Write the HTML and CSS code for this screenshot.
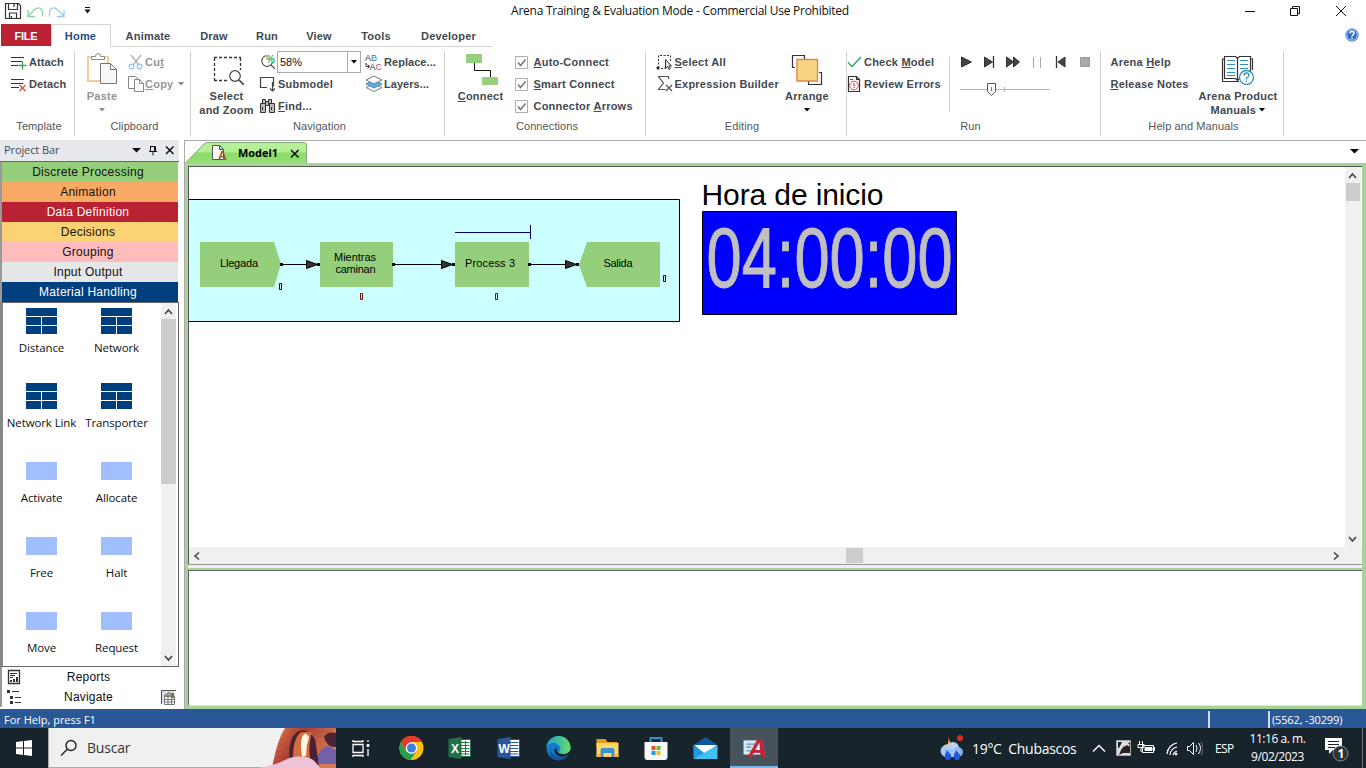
FILE: index.html
```html
<!DOCTYPE html>
<html lang="es">
<head>
<meta charset="utf-8">
<title>Arena Training &amp; Evaluation Mode</title>
<link rel="stylesheet" href="styles.css">
</head>
<body>
<svg width="0" height="0" class="defs">
  <symbol id="net" viewBox="0 0 31 26"><path fill="#003f7d" d="M0 0h31v8H0zM0 9h15v8H0zM16 9h15v8H16zM0 18h15v8H0zM16 18h15v8H16z"/></symbol>
  <symbol id="box" viewBox="0 0 31 26"><path fill="#a1bfff" d="M0 4h31v18H0z"/></symbol>
  <symbol id="chk" viewBox="0 0 13 13"><path fill="#fff" stroke="#b0b0b0" d="M.5.5h12v12H.5z"/><path fill="none" stroke="#777" stroke-width="1.6" d="M3 6.5 5.5 9.5 10.5 3.5"/></symbol>
  <symbol id="arr" viewBox="0 0 6 4"><path d="M0 0h6L3 3.5z"/></symbol>
</svg>
<div class="window">
  <header class="titlebar">
    <div class="quick">
      <svg width="95" height="22" viewBox="0 0 95 22" fill="none">
        <path stroke="#333" stroke-width="1.2" d="M5.5 3.5h13l2 2v13h-15zM8.5 3.5v6h9v-6M9.500 18v-5h7v5M11.500 16v2M14 4v3"/>
        <path stroke="#8fd0a5" stroke-width="1.3" d="M28 10v6.500h7M28 16l8-7.500q5-2 6.500 3v5"/>
        <path stroke="#9cc9ea" stroke-width="1.300" d="M64 10v6.500h-7M64 16l-8-7.500q-5-2-6.500 3v5"/>
        <path fill="#111" d="M85 7h5v1h-5zM84.500 9.500h6l-3 4z"/>
      </svg>
    </div>
    <div class="title">Arena Training &amp; Evaluation Mode - Commercial Use Prohibited</div>
    <svg class="winbtns" width="126" height="22" viewBox="1240 0 126 22" fill="none" stroke="#111">
      <path d="M1245 11.500h10M1290.500 8.500h7v7h-7zM1292.500 8v-1.500h7v7h-2M1336 6l10 10M1346 6l-10 10"/>
    </svg>
  </header>

  <nav class="tabs">
    <span class="tab file">FILE</span><span class="tab home">Home</span><span class="tab t3">Animate</span><span class="tab t4">Draw</span><span class="tab t5">Run</span><span class="tab t6">View</span><span class="tab t7">Tools</span><span class="tab t8">Developer</span>
    <svg class="help" width="14" height="14" viewBox="0 0 14 14"><circle cx="7" cy="7" r="6.300" fill="#2f67c8" stroke="#7ea6de"/><circle cx="7" cy="7" r="5.200" fill="none" stroke="#dce9fa" stroke-width=".7"/><path fill="none" stroke="#fff" stroke-width="1.500" d="M5 5.500q0-2 2-2t2 1.700q0 1-1 1.600T7 8.500M7 9.500V11"/></svg>
  </nav>

  <section class="ribbon">
    <div class="group g1">
      <div class="body">
        <div class="col">
          <div class="btn"><svg width="18" height="16" viewBox="0 0 18 16" fill="none"><path stroke="#333" stroke-width="1.200" d="M1 3.500h13M1 7.500h11M1 11.500h7"/><path stroke="#3da563" stroke-width="1.300" d="M12.500 7.500v8M8.500 11.500h8"/></svg><b>Attach</b></div>
          <div class="btn"><svg width="18" height="16" viewBox="0 0 18 16" fill="none"><path stroke="#333" stroke-width="1.200" d="M1 3.500h13M1 7.500h12M1 11.500h8"/><path stroke="#e34848" stroke-width="1.300" d="M9.500 9l6 6M15.500 9l-6 6"/></svg><b>Detach</b></div>
        </div>
      </div>
      <div class="glabel">Template</div>
    </div>
    <div class="group g2">
      <div class="body dim">
        <div class="big paste">
          <svg width="32" height="34" viewBox="0 0 32 34"><path fill="none" stroke="#f5cd9c" stroke-width="2" d="M2 6h20v24H2z"/><path fill="#fff" stroke="#8a8a8a" d="M5.500 8.500v-3h4q0-3 2.500-3t2.500 3h4v3z"/><path fill="#f7f7f8" stroke="#777" d="M14.500 12.500h10l6 6v14h-16zM24.500 12.500v6h6"/></svg>
          <b>Paste</b><svg class="down" width="6" height="4"><use href="#arr"/></svg>
        </div>
        <div class="col clip">
          <div class="btn"><svg width="18" height="18" viewBox="0 0 18 18" fill="none"><path stroke="#999" stroke-width="1.200" d="M4 2l8 10M14 2 6 12"/><circle cx="4.500" cy="13.500" r="2.300" stroke="#8fc5e8" stroke-width="1.200"/><circle cx="12.500" cy="13.500" r="2.300" stroke="#8fc5e8" stroke-width="1.200"/></svg><b>Cu<u>t</u></b></div>
          <div class="btn"><svg width="18" height="18" viewBox="0 0 18 18" fill="#fff" stroke="#888"><path d="M1.500 1.500h7l3 3v9h-10z"/><path d="M7.500 4.500h5l4 4v8h-9zM12.500 4.500v4h4"/></svg><b><u>C</u>opy</b><svg class="side" width="6" height="4"><use href="#arr"/></svg></div>
        </div>
      </div>
      <div class="glabel">Clipboard</div>
    </div>
    <div class="group g3">
      <div class="body">
        <div class="big sel">
          <svg width="32" height="34" viewBox="0 0 32 34" fill="none"><path stroke="#333" stroke-width="1.300" stroke-dasharray="3 2" d="M2 6.500h27M2.500 7v22M28.500 7v12M2 29.500h15"/><circle cx="23" cy="25" r="5.300" fill="#fff" stroke="#444" stroke-width="1.200"/><path stroke="#444" stroke-width="1.700" d="M27 29l5 5"/></svg>
          <b>Select<br>and Zoom</b>
        </div>
        <div class="col nav1">
          <div class="btn"><svg width="18" height="18" viewBox="0 0 18 18" fill="none"><path stroke="#555" stroke-width="1.100" d="M7 2.500a5.500 5.500 0 1 0 6.500 7M12 12l4 4"/><text x="7" y="9.500" class="pct">%</text></svg><span class="combo"><span>58%</span><i><svg width="6" height="4"><use href="#arr"/></svg></i></span></div>
          <div class="btn"><svg width="18" height="18" viewBox="0 0 18 18" fill="none" stroke="#444" stroke-width="1.200"><path d="M8 12.500H1.500v-10h13v9M13.500 7v9M11 13.500l2.500 2.500 2.500-2.500"/></svg><b>Submodel</b></div>
          <div class="btn"><svg width="18" height="18" viewBox="0 0 18 18" fill="#bbb" stroke="#333"><path d="M3.500 2.500h3v4h-3zM9.500 2.500h3v4h-3zM6.500 4.500h3v4h-3zM1.500 6.500h5v9h-5zM10.500 6.500h5v9h-5zM3.500 10v3M12.500 10v3"/></svg><b><u>F</u>ind...</b></div>
        </div>
        <div class="col nav2">
          <div class="btn"><svg width="18" height="18" viewBox="0 0 18 18"><text x="0" y="8" class="abc">A<tspan fill="#1e80ca">B</tspan></text><text x="4.500" y="17" class="abc">A<tspan fill="#e03b3b">C</tspan></text><path fill="none" stroke="#333" d="M1 10v3.500h3M2.500 11.500l2 2-2 2"/></svg><b>Replace...</b></div>
          <div class="btn"><svg width="18" height="18" viewBox="0 0 18 18" stroke="#777"><path fill="#fff" d="M1 12.500l8-4 8 4-8 4z"/><path fill="#55aee5" stroke="#3690cb" d="M1 9l8-4 8 4-8 4z"/><path fill="#fff" d="M1 5l8-4 8 4-8 4z"/></svg><b>Layers...</b></div>
        </div>
      </div>
      <div class="glabel">Navigation</div>
    </div>
    <div class="group g4">
      <div class="body">
        <div class="big conn">
          <svg width="34" height="34" viewBox="0 0 34 34"><path fill="#95cf7c" d="M2 3h16v9H2zM18 26h16v9H18z"/><path fill="none" stroke="#111" d="M10.500 12v7.500h16V26"/></svg>
          <b><u>C</u>onnect</b>
        </div>
        <div class="col checks">
          <div class="btn"><svg width="13" height="13"><use href="#chk"/></svg><b><u>A</u>uto-Connect</b></div>
          <div class="btn"><svg width="13" height="13"><use href="#chk"/></svg><b><u>S</u>mart Connect</b></div>
          <div class="btn"><svg width="13" height="13"><use href="#chk"/></svg><b>Connector <u>A</u>rrows</b></div>
        </div>
      </div>
      <div class="glabel">Connections</div>
    </div>
    <div class="group g5">
      <div class="body">
        <div class="col edit">
          <div class="btn"><svg width="17" height="18" viewBox="0 0 17 18" fill="none" stroke="#333"><path stroke-dasharray="2 1.500" d="M2.500 15V2.500h12V8M5 15.500h5"/><path fill="#333" d="M1 14h2v2H1z"/><path fill="#ddd" d="M9.500 6.500v9l2-2 1.500 3 1.500-1-1.500-2.500h2.500z"/></svg><b><u>S</u>elect All</b></div>
          <div class="btn"><svg width="17" height="18" viewBox="0 0 17 18" fill="none" stroke="#555" stroke-width="1.200"><path d="M12.500 4V1.500h-10l5 6.500-5 6.500h7M10 10l6 6M16 10l-6 6"/></svg><b>Expression Builder</b></div>
        </div>
        <div class="big arrange">
          <svg width="32" height="34" viewBox="0 0 32 34"><path fill="none" stroke="#333" stroke-width="1.200" d="M4 16.500H1.500v-12h12V8M28 21.500h2.500v12h-13V30"/><path fill="#f7d584" stroke="#dc8a46" stroke-width="1.400" d="M6 8.500h20.500V30H6z"/></svg>
          <b>Arrange</b><svg class="down" width="6" height="4"><use href="#arr"/></svg>
        </div>
      </div>
      <div class="glabel">Editing</div>
    </div>
    <div class="group g6">
      <div class="body">
        <div class="col check">
          <div class="btn"><svg width="17" height="18" viewBox="0 0 17 18" fill="none"><path stroke="#3da563" stroke-width="1.500" d="M1 9.500l4 4L14 4"/></svg><b>Check <u>M</u>odel</b></div>
          <div class="btn"><svg width="17" height="18" viewBox="0 0 17 18" fill="#fff"><path stroke="#333" stroke-width="1.200" d="M1.500 1.500h8l3 3v12h-11zM9.500 1.500v3h3"/><path stroke="#555" d="M3 4.500h3"/><circle cx="7" cy="10.500" r="4.300" stroke="#e04545"/><path stroke="#e04545" stroke-width="1.300" d="M7 8v3M7 12v1"/></svg><b>Review Errors</b></div>
        </div>
        <svg class="player" width="151" height="88" viewBox="949 49 151 88">
          <path stroke="#d0d0d0" d="M949.500 57v55"/>
          <g fill="#444" stroke="#333"><path d="M961.500 57v10l10-5zM984.500 57v10l8-5zM1006.500 57v10l7-5zM1013.500 57v10l6-5zM1065 57v10l-7-5z"/><path fill="none" stroke-width="1.300" d="M993.500 56v12M1056.500 56v12"/></g>
          <path stroke="#aaa" d="M1033.500 57v11M1040.500 57v11"/><path fill="#aaa" stroke="#999" d="M1080.500 57.500h9v9h-9z"/>
          <path fill="none" stroke="#b4b4b4" d="M960 89.500h90M1004.500 87v5"/><path fill="#fff" stroke="#555" d="M987.500 83.500h8v8l-4 4-4-4z"/><path stroke="#777" d="M991.500 87v4"/>
        </svg>
      </div>
      <div class="glabel">Run</div>
    </div>
    <div class="group g7">
      <div class="body">
        <div class="col"><div class="btn"><b>Arena <u>H</u>elp</b></div><div class="btn"><b><u>R</u>elease Notes</b></div></div>
        <div class="big manuals">
          <svg width="34" height="34" viewBox="0 0 34 34" fill="#fff"><path stroke="#333" stroke-width="1.200" d="M3 8H1.500v22.500H18M29 8h2.500v11M16.500 8v22.500M3.500 5.500h11l2 2 2-2h11v22h-11l-2 2-2-2h-11z"/><path stroke="#2d8fc4" stroke-width="1.200" d="M6 9.500h8M6 13.500h8M6 17.500h8M6 21.500h8M6 24.500h8M19 9.500h8M19 13.500h8M19 17.500h8"/><circle cx="25.500" cy="26.500" r="7" stroke="#2d8fc4" stroke-width="1.300"/><path fill="none" stroke="#2d8fc4" stroke-width="1.300" d="M23 24.500q0-2.500 2.500-2.500t2.500 2-2.500 3v1.500M25.500 29.500V31"/></svg>
          <b>Arena Product<br>Manuals <svg width="6" height="4"><use href="#arr"/></svg></b>
        </div>
      </div>
      <div class="glabel">Help and Manuals</div>
    </div>
  </section>

  <main class="workspace">
    <aside class="project">
      <div class="phead"><span>Project Bar</span><svg width="44" height="12" viewBox="0 0 44 12" fill="none" stroke="#111"><path fill="#111" stroke="none" d="M0 4h9L4.500 8.500z"/><path d="M18.500 2.500h5v5M18.500 2v5.500M17 7.500h8M21 8v3.500M22.500 2v5"/><path stroke-width="1.500" d="M34 2.500l7.500 7.500M41.500 2.500L34 10"/></svg></div>
      <div class="panels">
        <div class="panel green">Discrete Processing</div>
        <div class="panel orange">Animation</div>
        <div class="panel red">Data Definition</div>
        <div class="panel yellow">Decisions</div>
        <div class="panel pink">Grouping</div>
        <div class="panel grey">Input Output</div>
        <div class="panel navy">Material Handling</div>
      </div>
      <div class="palette">
        <div class="items">
          <div class="item"><svg width="31" height="26"><use href="#net"/></svg>Distance</div>
          <div class="item"><svg width="31" height="26"><use href="#net"/></svg>Network</div>
          <div class="item"><svg width="31" height="26"><use href="#net"/></svg>Network Link</div>
          <div class="item"><svg width="31" height="26"><use href="#net"/></svg>Transporter</div>
          <div class="item"><svg width="31" height="26"><use href="#box"/></svg>Activate</div>
          <div class="item"><svg width="31" height="26"><use href="#box"/></svg>Allocate</div>
          <div class="item"><svg width="31" height="26"><use href="#box"/></svg>Free</div>
          <div class="item"><svg width="31" height="26"><use href="#box"/></svg>Halt</div>
          <div class="item"><svg width="31" height="26"><use href="#box"/></svg>Move</div>
          <div class="item"><svg width="31" height="26"><use href="#box"/></svg>Request</div>
        </div>
        <div class="pscroll"><svg width="15" height="16" viewBox="0 0 15 16"><path d="M4 11l3.500-4 3.500 4"/></svg><div class="pthumb"></div><svg class="end" width="15" height="16" viewBox="0 0 15 16"><path d="M4 6l3.500 4L11 6"/></svg></div>
      </div>
      <div class="extra"><svg width="14" height="16" viewBox="0 0 14 16" fill="none" stroke="#333"><path stroke-width="1.300" d="M1.500 1.500h11v13h-11z"/><path d="M3 4.500h7M3 6.500h5M3 8.500h3"/><path stroke-width="2" d="M4 13v-2M7 13v-3M10 13V8"/></svg><span>Reports</span><i></i></div>
      <div class="extra"><svg width="14" height="16" viewBox="0 0 14 16" fill="#333"><path d="M0 1h3v3H0zM3 7h3v3H3zM3 12h3v3H3zM5 2h7v1H5zM8 8h6v1H8zM8 13h6v1H8z"/></svg><span>Navigate</span><svg width="15" height="15" viewBox="0 0 15 15" fill="none" stroke="#777"><path fill="#ddd" stroke="#555" d="M.5 14V.5H15"/><path fill="#fff" d="M3.500 6.500h10v8h-10zM3 9.500h10M3 12h10M7 7v7M10.500 7v7"/><path fill="#aaa" d="M3 6l5-3.500 3 1.500v2z"/><path stroke="#7b7a35" stroke-width="2.500" d="M12 3v5"/></svg></div>
    </aside>

    <section class="doc">
      <div class="doctabs">
        <svg class="tabshape" width="124" height="23" viewBox="0 0 124 23"><defs><linearGradient id="tg" x2="0" y2="1"><stop stop-color="#b8f29a"/><stop offset=".45" stop-color="#b2ed92"/><stop offset=".5" stop-color="#8bdc68"/><stop offset="1" stop-color="#96df78"/></linearGradient></defs><path fill="url(#tg)" stroke="#83a777" d="M1 22.500 19 4q2-2.500 5-2.500h96q2.500 0 2.500 2.500v18.500"/><path fill="#fff" stroke="#555" d="M28.500 4.500h7l4 4v10h-11zM35.500 4.500v4h4"/><text x="34" y="19" class="docA">A</text><text x="54" y="16" class="docname" textLength="40" lengthAdjust="spacingAndGlyphs">Model1</text><path stroke="#111" stroke-width="1.600" d="M107 9l7.500 7.500M114.500 9l-7.500 7.500"/></svg>
        <svg width="10" height="6" viewBox="0 0 10 6"><path d="M0 0h9L4.500 4.500z"/></svg>
      </div>
      <div class="frame">
        <div class="view">
          <svg class="canvas" width="1156" height="380" viewBox="189 167 1156 380">
            <path fill="#cff" stroke="#000" d="M187.500 199.500h492v122h-492z"/>
            <g fill="#95cf7c"><path d="M200 242h74l7 22-7 23h-74zM320 242h73v45h-73zM455 242h74v45h-74zM587 242h73v45h-73l-8-22z"/></g>
            <g stroke="#000"><path d="M281 264.500h39M393 264.500h62M529 264.500h50"/><path fill="#333" d="M306.500 260.500v8l11-4zM441.500 260.500v8l11-4zM565.500 260.500v8l11-4z"/></g>
            <path d="M280 263h3v3h-3zM317 263h3v3h-3zM392 263h3v3h-3zM452 263h3v3h-3zM528 263h3v3h-3zM576 263h3v3h-3z"/>
            <path fill="none" stroke="#006" d="M455 232.500h75M530.500 225v14M279.500 283.500h2v6h-2zM663.500 275.500h2v6h-2z"/>
            <path fill="none" stroke="#701010" d="M360.500 293.500h2v6h-2zM495.500 293.500h2v6h-2z"/>
            <g class="node"><text x="220" y="267" textLength="38">Llegada</text><text x="334" y="261" textLength="42">Mientras</text><text x="335.500" y="273" textLength="40">caminan</text><text x="465" y="267" textLength="50">Process 3</text><text x="603.500" y="267" textLength="29">Salida</text></g>
            <text class="start" x="701.500" y="204.500" textLength="182">Hora de inicio</text>
            <path fill="#00f" stroke="#000" d="M702.500 211.500h254v103h-254z"/>
            <text class="clock" transform="translate(706.500 287) scale(.744 1)">04:00:00</text>
          </svg>
          <div class="vscroll"><svg width="15" height="16" viewBox="0 0 15 16"><path d="M4 11l3.500-4 3.500 4"/></svg><div class="vthumb"></div><svg class="end" width="15" height="16" viewBox="0 0 15 16"><path d="M4 6l3.500 4L11 6"/></svg></div>
        </div>
        <div class="hscroll"><svg width="16" height="16" viewBox="0 0 16 16"><path d="M10 4.500L6 8l4 3.500"/></svg><div class="hthumb"></div><svg class="hend" width="16" height="16" viewBox="0 0 16 16"><path d="M6 4.500L10 8l-4 3.500"/></svg></div>
        <div class="split"></div>
        <div class="lower"></div>
      </div>
    </section>
  </main>

  <footer class="status"><span>For Help, press F1</span><span class="cell blank"></span><span class="cell">(5562, -30299)</span></footer>

  <div class="taskbar">
    <div class="startbtn"><svg width="16" height="16" viewBox="0 0 16 16"><path fill="#fff" d="M0 2l7-1v6.500H0zM8 1l8-1v7.500H8zM0 8.500h7V15l-7-1zM8 8.500h8V16l-8-1z"/></svg></div>
    <div class="search"><svg width="18" height="18" viewBox="0 0 18 18" fill="none" stroke="#222" stroke-width="1.400"><circle cx="11" cy="6.500" r="5"/><path d="M7.500 10L1 16.500"/></svg><span>Buscar</span>
      <svg class="art" width="78" height="40" viewBox="258 728 78 40"><defs><linearGradient id="rk" x2="1" y2=".4"><stop stop-color="#e97b51"/><stop offset=".45" stop-color="#a63e31"/><stop offset="1" stop-color="#d87c55"/></linearGradient></defs><path fill="url(#rk)" d="M272 768q5-28 13-40h51v40z"/><path fill="#4d2030" d="M290 762q-3-22 7-30 10-5 18 7l4 26-17-1z"/><path fill="#d46c42" d="M293 758q0-20 8-26h11q-4 12-2 27z"/><path fill="#fff4e0" d="M302 757q-2-14 0-20 3-7 7 0-3 9-3 19z"/><path fill="#7161a8" d="M318 756q2-9 11-10l7 4v14h-18z"/><path fill="#4a2634" d="M324 737q3-6 12-4v14q-9 1-12-10z"/><path fill="#efc3d7" d="M258 768q18-3 27-8 9-5 20-3 8 1 12 7l3 4z"/><path stroke="#b84d37" d="M280 745h9M276 752h13M315 732h16M316 736h8"/></svg>
    </div>
    <div class="apps">
      <svg class="app" viewBox="0 0 48 40" fill="none" stroke="#fff"><path stroke-width="1.300" d="M16.500 16.500h10v8h-10zM16.500 12v2M26.500 12v2M16 13.500h11M16 27.500h11M16.500 27v2M26.500 27v2M31.500 12v2M31.500 21v7"/><path fill="#fff" d="M30.500 16.500h2v2h-2z"/></svg>
      <svg class="app" viewBox="1 0 48 40"><circle cx="27" cy="20" r="12" fill="#fbc116"/><path fill="#e33b2e" d="M16.500 14a12 12 0 0 1 21 0H27l-6 9z"/><path fill="#22a250" d="M16.500 14a12 12 0 0 0 9.500 18l6-9-5 3-6-3z"/><circle cx="27" cy="20" r="5.800" fill="#fff"/><circle cx="27" cy="20" r="4.500" fill="#3c7de6"/></svg>
      <svg class="app" viewBox="3 0 48 40"><path fill="#fff" stroke="#23754a" d="M27 11.500h12v17H27z"/><path stroke="#23754a" d="M29 14.500h9M29 17.500h9M29 20.500h9M29 23.500h9M29 26h9M34 13v14"/><path fill="#1f7246" d="M17 11l13-2v22l-13-2z"/><text x="19.500" y="25" class="office">X</text></svg>
      <svg class="app" viewBox="3 0 48 40"><path fill="#fff" stroke="#2b579a" d="M27 11.500h12v17H27z"/><path stroke="#2b579a" d="M29 14.500h9M29 17.500h9M29 20.500h9M29 23.500h9M29 26h9"/><path fill="#2b579a" d="M17 11l13-2v22l-13-2z"/><text x="18" y="25" class="office">W</text></svg>
      <svg class="app" viewBox="3 0 48 40"><defs><linearGradient id="ed" x2="1"><stop stop-color="#189fdb"/><stop offset="1" stop-color="#67dd62"/></linearGradient></defs><circle cx="29" cy="20" r="12" fill="#1779cd"/><path fill="url(#ed)" d="M17 19a12 12 0 0 1 24 2q-1 5-7 5-4 0-5-2 3-2 1-6-6-7-13 1z"/><path fill="#1555a0" d="M23 18q-4 5 2 9 5 3 12 1-6 7-14 3-5-4 0-13z"/><path fill="#18242b" d="M27 19q-1 7 6 7 5 1 8-4 0 4-4 6-7 2-11-2-3-4 1-7z"/></svg>
      <svg class="app" viewBox="4 0 48 40"><path fill="#e69a1d" d="M19 11h9l2 3h10v5H19z"/><path fill="#ffd768" d="M19 15h22v14H19z"/><path fill="#3f90d2" d="M23 29v-7q0-2 2-2h10q2 0 2 2v7h-3v-4h-8v4z"/><path fill="#f2b63c" d="M19 26h4v3h-4zM37 26h4v3h-4z"/></svg>
      <svg class="app" viewBox="5 0 48 40"><path fill="none" stroke="#2796cd" stroke-width="2" d="M25 15v-5h11v5"/><path fill="#f6f7f8" d="M19 14h23v15q0 3-3 3H22q-3 0-3-3z"/><path fill="#e84d24" d="M26 18h4v4h-4z"/><path fill="#75b928" d="M31 18h4v4h-4z"/><path fill="#1b9de2" d="M26 23h4v4h-4z"/><path fill="#f6b817" d="M31 23h4v4h-4z"/></svg>
      <svg class="app" viewBox="5 0 48 40"><path fill="#12589d" d="M19 17l12-8 12 8v5H19z"/><path fill="#fff" d="M20 17h22L31 27z"/><path fill="#229bde" d="M19 17l12 9-12 5z"/><path fill="#41c1f3" d="M43 17v14H19z"/></svg>
      <svg class="app active" viewBox="0 0 48 40"><path fill="#d6eaf5" d="M13 13h18v15H13z"/><path stroke="#6794bb" stroke-width="1.400" d="M16 17h9M16 20h5M16 24h7"/><text class="arenaA" x="18" y="30">A</text></svg>
    </div>
    <div class="tray">
      <svg width="28" height="28" viewBox="0 0 28 28"><path fill="#ffc43f" d="M11 2q-1 7 6 10l-5 5-8-2 2-4 4-1z"/><circle cx="8" cy="17" r="5.500" fill="#a9c9f2"/><circle cx="15" cy="14" r="6" fill="#b8d2f5"/><circle cx="20" cy="18" r="5" fill="#87b1ee"/><path fill="#9fc3f3" d="M6 15h15v8H6z"/><path fill="#1f58dc" d="M9 16l4 5q1 5-3 5t-3-5zM18 16l4 5q1 5-3 5t-3-5z"/><circle cx="22" cy="4" r="3" fill="#d72e23"/></svg>
      <span class="weather">19°C&nbsp; Chubascos</span>
      <svg class="icons" width="112" height="24" viewBox="1091 736 112 24" fill="none" stroke="#fff"><path stroke-width="1.400" d="M1093 751.500l6-6 6 6"/><path fill="#ddd" stroke="#aaa" d="M1116.500 740.500h14v15h-14z"/><path fill="#222" stroke="none" d="M1118 742h4l-3 6h-1zM1124 746l6-4v11h-7l-4 2 2-5z"/><path stroke="#ddd" stroke-width="2" d="M1124 746q4-4 5 0"/><path d="M1142.500 745.500h11v7h-11zM1154.500 747v4M1139.500 741v3M1142.500 741v3M1138 744.500h6v3h-6zM1141 747v5"/><path fill="#fff" d="M1145 747.500h7v3h-7z"/><path stroke-width="1.200" d="M1167 754a12 12 0 0 1 10-11M1170 755a9 9 0 0 1 7-8M1173 755a6 6 0 0 1 4-4"/><circle cx="1176" cy="754" r="1" fill="#fff"/><path d="M1187.500 746.500h2l4-4v12l-4-4h-2zM1196 745q2 3 0 7M1198.500 743q4 5 0 11"/><path stroke="#777" d="M1201 742q4 6 0 13"/></svg>
      <span class="lang">ESP</span>
      <div class="time"><span>11:16 a. m.</span><span>9/02/2023</span></div>
      <svg class="note" width="24" height="26" viewBox="0 0 24 26"><path fill="#fff" d="M0 1h17v12H8l-4 4v-4H0z"/><path stroke="#18232b" d="M3 4.500h11M3 7.500h11M3 10.500h7"/><circle cx="15.500" cy="16.500" r="7.500" fill="#2e3338" stroke="#888"/><text x="12.500" y="21" class="badge">1</text></svg>
      <i class="peek"></i>
    </div>
  </div>
</div>
</body>
</html>
```

FILE: styles.css
```css
* { box-sizing: border-box; }
body { margin: 0; background: #fff; font-family: "Open Sans", "Noto Sans", sans-serif; color: #111; }
svg { display: block; flex: none; }
.defs { position: absolute; }
.window { width: 1366px; height: 768px; display: flex; flex-direction: column; overflow: hidden; }

.titlebar { height: 24px; flex: none; display: grid; grid-template-columns: 240px 880px 1fr; }
.title { text-align: center; font: 12px/22px "Open Sans", sans-serif; letter-spacing: -.26px; white-space: nowrap; }
.winbtns { justify-self: end; }

.tabs { height: 23px; flex: none; display: flex; padding-left: 1px; font: bold 11px/24px "Liberation Sans", sans-serif; letter-spacing: .2px; color: #434950; }
.tab { text-align: center; height: 23px; border-bottom: 1px solid #d4d4d4; }
.file { width: 50px; height: 22px; background: #ba2132; color: #fff; border: 0; letter-spacing: -.2px; }
.home { width: 60px; border: 1px solid #d4d4d4; border-bottom: 0; color: #1e4c86; line-height: 22px; padding-right: 1px; }
.t3 { width: 74px; } .t4 { width: 58px; } .t5 { width: 48px; } .t6 { width: 56px; } .t7 { width: 58px; } .t8 { width: 88px; padding-right: 1px; }
.help { margin: 4px 7px 0 auto; }

.ribbon { height: 93px; flex: none; display: flex; padding-top: 4px; font: 11px/14px "Liberation Sans", sans-serif; color: #434950; }
.group { height: 85px; border-right: 1px solid #d2d2d2; display: flex; flex-direction: column; }
.body { display: flex; height: 68px; }
.glabel { text-align: center; color: #555; line-height: 15px; letter-spacing: .1px; white-space: nowrap; padding-left: 4px; }
.g1 { width: 75px; } .g2 { width: 116px; } .g3 { width: 254px; } .g4 { width: 201px; } .g5 { width: 201px; } .g6 { width: 254px; } .g7 { width: 183px; }
.g5 .glabel { padding-right: 12px; }
.g7 .glabel { padding-left: 3px; }
.col { display: flex; flex-direction: column; }
.btn { height: 22px; display: flex; align-items: center; gap: 1px; white-space: nowrap; }
.btn b, .big b { letter-spacing: .23px; }
u { text-underline-offset: 1px; }
.g1 .col { padding-left: 10px; }
.g1 .btn b { letter-spacing: .1px; }
.big { display: flex; flex-direction: column; align-items: center; text-align: center; white-space: nowrap; }
.big b { margin-top: 4px; }
.down { margin-top: 5px; }
.dim { color: #969696; fill: #888; }
.paste { width: 54px; }
.clip .btn { gap: 0; }
.clip { margin-left: -2px; }
.g2 .side { margin-left: 5px; }
.sel { width: 70px; padding-left: 1px; }
.sel svg { margin-left: 2px; }
.nav1 { width: 106px; margin-left: -2px; }
.combo { width: 84px; height: 22px; border: 1px solid #aaa; display: flex; color: #111; line-height: 20px; margin-left: -1px; }
.combo span { flex: 1; padding-left: 2px; }
.combo i { width: 13px; border-left: 1px solid #aaa; display: flex; align-items: center; justify-content: center; }
.nav2 .btn b { letter-spacing: .05px; }
.pct { font: bold 10px "Liberation Sans", sans-serif; fill: #3aa868; }
.abc { font: 9px "Liberation Sans", sans-serif; fill: #333; }
.conn { width: 70px; padding-left: 1px; }
.checks .btn { gap: 5px; }
.checks .btn b { padding-left: .5px; }
.edit { padding-left: 10px; width: 132px; }
.edit .btn b { padding-left: .5px; }
.arrange { width: 58px; }
.check { width: 103px; }
.check .btn { gap: 0; }
.player { margin-top: -2px; }
.g7 .col { padding-left: 9px; width: 96px; }
.g7 .col b { padding-left: .5px; }
.manuals { width: 82px; }
.manuals b svg { display: inline; vertical-align: 2px; }
.g6 .glabel { padding-right: 10px; }

.workspace { height: 569px; flex: none; display: flex; }
.project { width: 184px; flex: none; padding: 0 5px 0 0; }
.phead { height: 21px; width: 179px; background: #e7e9ed; display: flex; align-items: center; justify-content: space-between; padding: 0 3px 2px 4px; font-size: 11px; letter-spacing: -.1px; color: #444b53; }
.panels { border-top: 1px solid #666; border-left: 2px solid #999; }
.panel { height: 20px; font: 12px/20px "Liberation Sans", sans-serif; letter-spacing: .26px; text-align: center; padding-right: 4px; width: 176px; }
.green { background: #95cf7c; } .orange { background: #f9a966; } .red { background: #ba2132; color: #fff; } .yellow { background: #fbd274; }
.pink { background: #ffbcbd; } .grey { background: #e6e7e9; } .navy { background: #003f7d; color: #fff; }
.palette { height: 365px; border: 1px solid #666; border-left: 3px solid #888; width: 179px; display: flex; }
.items { width: 158px; height: 363px; overflow: hidden; display: grid; grid-template-columns: 75px 75px; grid-auto-rows: 75px; padding: 5px 0 0 1px; }
.item { display: flex; flex-direction: column; align-items: center; gap: 5px; font: 11.5px/17px "Open Sans", sans-serif; letter-spacing: -.12px; white-space: nowrap; }
.pscroll, .vscroll { background: #f0f0f0; display: flex; flex-direction: column; fill: none; stroke: #444; stroke-width: 1.6; }
.pscroll { width: 15px; }
.pthumb { height: 165px; background: #cdcdcd; }
.end { margin-top: auto; }
.extra { height: 20px; width: 178px; border-left: 2px solid #999; display: grid; grid-template-columns: 16px 1fr 17px; align-items: center; padding-left: 5px; font: 12px/20px "Liberation Sans", sans-serif; letter-spacing: .2px; }
.extra span { text-align: center; padding-right: 7px; }

.doc { flex: 1; min-width: 0; display: flex; flex-direction: column; border-top: 1px solid #aaa; border-left: 1px solid #aaa; }
.doctabs { height: 22px; display: flex; justify-content: space-between; align-items: center; padding-right: 6px; }
.tabshape { margin-left: -1px; }
.docname { font: bold 11px "Open Sans", sans-serif; }
.docA { font: bold 12px "Liberation Sans", sans-serif; fill: #8d4d2f; }
.frame { height: 546px; border: 3px solid #a5d398; border-right-width: 4px; }
.view { height: 381px; display: flex; border-left: 1px solid #555; border-top: 1px solid #555; }
.canvas { display: block; }
.node { font: 11px "Liberation Sans", sans-serif; }
.start { font: 30px "Liberation Sans", sans-serif; }
.clock { font: 85px "Liberation Sans", sans-serif; fill: #c0c0c0; stroke: #c0c0c0; stroke-width: 1; }
.vscroll { width: 16px; }
.vthumb { height: 18px; margin-left: 1px; width: 14px; background: #cdcdcd; }
.hscroll { height: 17px; background: #f0f0f0; border-left: 1px solid #555; display: flex; align-items: center; fill: none; stroke: #444; stroke-width: 1.6; }
.hthumb { width: 17px; height: 15px; background: #cdcdcd; margin-left: 641px; }
.hend { margin-left: auto; margin-right: 18px; }
.split { height: 6px; background: #f0f0f0; border-top: 1px solid #999; border-bottom: 2px solid #a5d398; }
.lower { height: 136px; border-left: 1px solid #666; border-top: 1px solid #666; border-bottom: 1px solid #e5e5e5; }

.status { height: 19px; flex: none; background: #2a5796; color: #fff; display: flex; padding-left: 4px; font-size: 11px; line-height: 21px; letter-spacing: 0; }
.cell { border-left: 2px solid #d0d9e6; width: 98px; padding-left: 2px; height: 17px; margin-top: 2px; line-height: 18px; letter-spacing: -.15px; }
.blank { width: 60px; margin-left: auto; }

.taskbar { height: 40px; flex: none; background: #18242b; color: #fff; display: flex; }
.startbtn { width: 48px; display: grid; place-items: center; }
.search { width: 288px; background: #f0f0f0; border: 1px solid #aaa; border-width: 0 0 1px 1px; display: flex; align-items: center; color: #333; font-size: 14px; padding-left: 11px; }
.search span { margin-left: 9px; letter-spacing: -.2px; }
.art { margin-left: auto; }
.apps { display: flex; }
.app { width: 49px; height: 40px; }
.active { width: 48px; margin-left: 2px; background: #46535b; border-bottom: 2px solid #78b9ed; }
.office { font: bold 12px "Liberation Sans", sans-serif; fill: #fff; }
.arenaA { font: italic bold 27px "Liberation Sans", sans-serif; fill: #c82035; }
.tray { margin-left: auto; display: flex; align-items: center; width: 428px; white-space: nowrap; }
.weather { width: 107px; margin-left: 6px; font-size: 14px; letter-spacing: -.3px; }
.icons { margin-left: 12px; }
.lang { width: 28px; margin-left: 12px; font-size: 12px; letter-spacing: -.6px; }
.time { width: 65px; margin-left: 2px; display: flex; flex-direction: column; text-align: center; font-size: 12px; line-height: 18px; letter-spacing: -.45px; }
.note { margin-left: 15px; margin-top: 4px; }
.peek { margin-left: auto; border-left: 1px solid #777; height: 40px; width: 4px; }
.badge { font: bold 12px "Open Sans", sans-serif; fill: #fff; }
```
